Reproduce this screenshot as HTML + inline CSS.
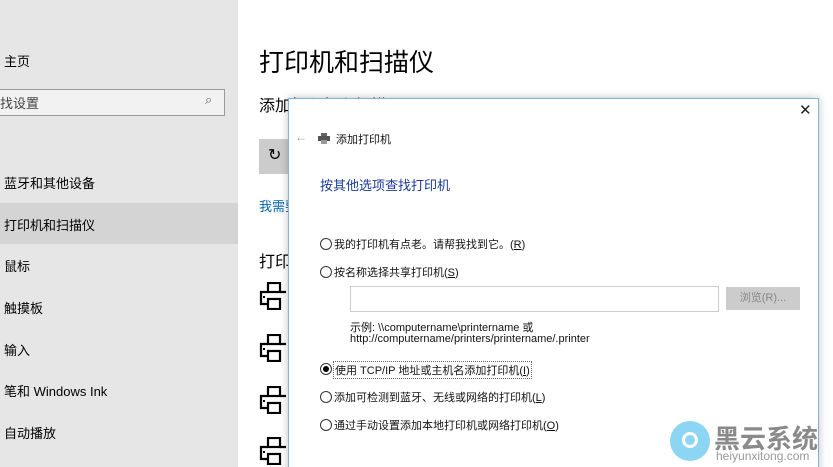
<!DOCTYPE html><html><head><meta charset="utf-8"><style>
html,body{margin:0;width:833px;height:467px;overflow:hidden}
body{background:#fff;font-family:"Liberation Sans","Noto Sans CJK SC",sans-serif;position:relative;color:#000}
.a{position:absolute;white-space:nowrap}
.side{position:absolute;left:0;top:0;width:238px;height:467px;background:#e6e6e6}
.nav{font-size:13px}
.pi{position:absolute;left:259px;width:28px;height:28px}
.r{position:absolute;width:10px;height:10px;border:1px solid #333;border-radius:50%;background:#fff}
.t{font-size:11px;color:#111}
</style></head><body>
<div class="side"></div>
<div class="a" style="left:0;top:203px;width:238px;height:41px;background:#d4d4d4"></div>
<div class="a nav" style="left:4px;top:51px">主页</div>
<div class="a" style="left:-2px;top:89px;width:225px;height:25px;border:1px solid #9a9a9a;background:#f2f2f2"></div>
<div class="a nav" style="left:0;top:93px;color:#444">找设置</div>
<div class="a" style="left:205px;top:92px;font-size:13px;color:#666">⌕</div>
<div class="a nav" style="left:4px;top:173px">蓝牙和其他设备</div>
<div class="a nav" style="left:4px;top:215px">打印机和扫描仪</div>
<div class="a nav" style="left:4px;top:256px">鼠标</div>
<div class="a nav" style="left:4px;top:298px">触摸板</div>
<div class="a nav" style="left:4px;top:340px">输入</div>
<div class="a nav" style="left:4px;top:381px">笔和 Windows Ink</div>
<div class="a nav" style="left:4px;top:423px">自动播放</div>
<div class="a" style="left:259px;top:43px;font-size:25px">打印机和扫描仪</div>
<div class="a" style="left:259px;top:92px;font-size:16px">添加打印机和扫描仪</div>
<div class="a" style="left:259px;top:139px;width:40px;height:35px;background:#ccc"></div>
<div class="a" style="left:268px;top:145px;font-size:16px">↻</div>
<div class="a" style="left:259px;top:196px;font-size:13px;color:#0063b1">我需要的打印机不在列表中</div>
<div class="a" style="left:259px;top:248px;font-size:16px">打印机和扫描仪</div>
<svg class="pi" style="top:282px" viewBox="0 0 28 28"><g fill="none" stroke="#000" stroke-width="2.2"><rect x="9" y="1" width="12" height="9"/><path d="M9 10H2v12h7M21 10h6"/><rect x="9" y="17" width="12" height="10"/></g><rect x="4" y="14" width="2" height="2"/></svg>
<svg class="pi" style="top:334px" viewBox="0 0 28 28"><g fill="none" stroke="#000" stroke-width="2.2"><rect x="9" y="1" width="12" height="9"/><path d="M9 10H2v12h7M21 10h6"/><rect x="9" y="17" width="12" height="10"/></g><rect x="4" y="14" width="2" height="2"/></svg>
<svg class="pi" style="top:386px" viewBox="0 0 28 28"><g fill="none" stroke="#000" stroke-width="2.2"><rect x="9" y="1" width="12" height="9"/><path d="M9 10H2v12h7M21 10h6"/><rect x="9" y="17" width="12" height="10"/></g><rect x="4" y="14" width="2" height="2"/></svg>
<svg class="pi" style="top:437px" viewBox="0 0 28 28"><g fill="none" stroke="#000" stroke-width="2.2"><rect x="9" y="1" width="12" height="9"/><path d="M9 10H2v12h7M21 10h6"/><rect x="9" y="17" width="12" height="10"/></g><rect x="4" y="14" width="2" height="2"/></svg>
<div class="a" style="left:288px;top:98px;width:529px;height:380px;background:#fff;border:1px solid #7fb2dc;box-shadow:0 0 8px rgba(0,0,0,.25)"></div>
<div class="a" style="left:799px;top:101px;font-size:15px;color:#222">✕</div>
<div class="a" style="left:295px;top:130px;font-size:12px;color:#999">←</div>
<svg class="a" style="left:318px;top:133px" width="12" height="11" viewBox="0 0 12 11"><rect x="3" y="0" width="6" height="3" fill="#666"/><rect x="0" y="3" width="12" height="5" fill="#555"/><rect x="3" y="7" width="6" height="4" fill="#999"/></svg>
<div class="a t" style="left:336px;top:131px">添加打印机</div>
<div class="a" style="left:320px;top:175px;font-size:13px;color:#1a3a99">按其他选项查找打印机</div>
<div class="r" style="left:320px;top:238px"></div><div class="a t" style="left:334px;top:236px">我的打印机有点老。请帮我找到它。(<u>R</u>)</div>
<div class="r" style="left:320px;top:266px"></div><div class="a t" style="left:334px;top:264px">按名称选择共享打印机(<u>S</u>)</div>
<div class="a" style="left:350px;top:286px;width:367px;height:24px;border:1px solid #ccc"></div>
<div class="a" style="left:726px;top:287px;width:74px;height:23px;background:#ccc;font-size:11px;color:#888;text-align:center;line-height:23px">浏览(R)...</div>
<div class="a t" style="left:350px;top:319px">示例: \\computername\printername 或</div>
<div class="a t" style="left:350px;top:333px">http://computername/printers/printername/.printer</div>
<div class="r" style="left:320px;top:363px"></div><div class="a" style="left:323px;top:366px;width:6px;height:6px;border-radius:50%;background:#000"></div>
<div class="a t" style="left:333px;top:361px;border:1px dotted #666;padding:0 1px">使用 TCP/IP 地址或主机名添加打印机(<u>I</u>)</div>
<div class="r" style="left:320px;top:391px"></div><div class="a t" style="left:334px;top:389px">添加可检测到蓝牙、无线或网络的打印机(<u>L</u>)</div>
<div class="r" style="left:320px;top:419px"></div><div class="a t" style="left:334px;top:417px">通过手动设置添加本地打印机或网络打印机(<u>O</u>)</div>
<div class="a" style="left:670px;top:421px;width:40px;height:40px;border-radius:50%;background:#8dd6f3"></div>
<div class="a" style="left:682px;top:432px;width:16px;height:16px;border-radius:50%;border:3px solid #fff;box-sizing:border-box"></div>
<div class="a" style="left:714px;top:419px;font-size:26px;font-weight:bold;color:#8a8a8a">黑云系统</div>
<div class="a" style="left:716px;top:449px;font-size:12px;color:#999">heiyunxitong.com</div>
</body></html>
